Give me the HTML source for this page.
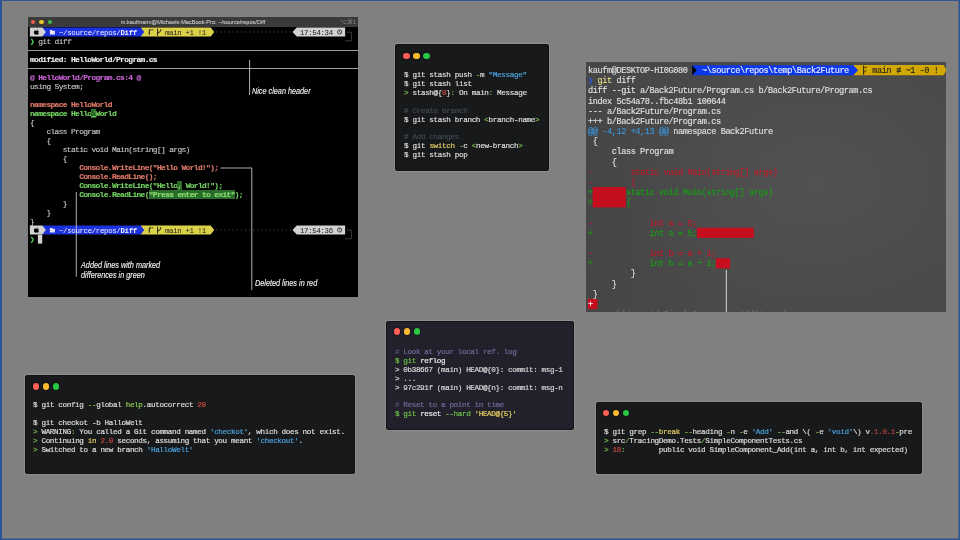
<!DOCTYPE html>
<html><head><meta charset="utf-8">
<style>
html,body{margin:0;padding:0;}
body{width:960px;height:540px;background:#808080;position:relative;overflow:hidden;font-family:"Liberation Mono",monospace;}
.frame{position:absolute;left:0;top:0;width:960px;height:540px;box-sizing:border-box;border:1.5px solid #2c5597;border-top-width:1px;}
.win{position:absolute;overflow:hidden;}
pre{margin:0;position:absolute;will-change:transform;font-family:"Liberation Mono",monospace;white-space:pre;}
.dots{position:absolute;}
.dot{position:absolute;width:6.6px;height:6.6px;border-radius:50%;box-shadow:0 0 0 0.7px rgba(0,0,0,0.35);}
.r{background:#fe5f57;}.y{background:#febc2e;}.g{background:#28c840;}
.t1{-webkit-text-stroke:0.15px currentColor;font-size:7.9px;letter-spacing:-0.64px;line-height:9px;color:#c8c8c8;}
.t1 b{font-weight:bold;}
.pg{color:#5fd75f;}.c{color:#c4c4c4;}.w{color:#ececec;}.m{color:#c462d0;}.rd{color:#dc7868;}.gr{color:#74d262;}
.hl{background:#2b6c2a;color:#86dc72;}
.pl{position:absolute;will-change:transform;font-size:7.4px;letter-spacing:-0.34px;line-height:8.9px;white-space:pre;}
.ann{position:absolute;will-change:transform;font:italic 7.28px/10px "Liberation Sans",sans-serif;color:#f2f2f2;-webkit-text-stroke:0.12px currentColor;white-space:nowrap;transform:scaleY(1.12);transform-origin:0 0;}
.t2{font-size:7.6px;letter-spacing:-0.33px;line-height:8.9px;color:#dcdcdc;-webkit-text-stroke:0.2px currentColor;}
pre i{font-style:normal;}
.g2{color:#79b84c;}.b2{color:#4aa0d8;}.r2{color:#c8503e;}.cm2{color:#414850;}.y2{color:#e0cc66;}
.t3{will-change:transform;-webkit-text-stroke:0.12px currentColor;font-size:8.6px;letter-spacing:-0.42px;line-height:10.17px;color:#e2e2e2;}
.bl3{color:#3a96dd;}.rd3{color:#c01828;}.gr3{color:#16a012;}
.tx{font-size:7.6px;color:#dcdcdc;-webkit-text-stroke:0.2px currentColor;}
.gh{color:#8cc850;}.r4{color:#c8483c;}.cm5{color:#4e4c6e;}.cm5b{color:#6c6a98;}.g5{color:#6cc04a;}.y5{color:#e6d060;}.r6{color:#b04040;}
</style></head>
<body>
<div style="position:absolute;left:2px;top:1px;width:956px;height:537px;box-shadow:inset 0 0 0 1px #84827e;"></div>
<div style="position:absolute;left:958px;top:0;width:1px;height:540px;background:#56698a;"></div>
<div style="position:absolute;left:0;top:538px;width:960px;height:1px;background:#56698a;"></div>
<div style="position:absolute;left:0;top:0;width:2px;height:540px;background:#2a5298;"></div>
<div style="position:absolute;left:0;top:0;width:960px;height:1px;background:#2f5592;"></div>
<div style="position:absolute;left:959px;top:0;width:1px;height:540px;background:#2c5597;"></div>
<div style="position:absolute;left:0;top:539px;width:960px;height:1px;background:#2c5597;"></div>

<!-- Window 1: macOS terminal -->
<div class="win" id="w1" style="left:28px;top:17px;width:330px;height:280px;background:#000;">
  <div style="position:absolute;left:0;top:0;width:330px;height:9.5px;background:#3a3a3a;"></div>
  <div style="position:absolute;left:0;top:0;width:330px;height:9.5px;text-align:center;will-change:transform;font:5.6px/10px 'Liberation Sans',sans-serif;color:#cacaca;-webkit-text-stroke:0.1px currentColor;">m.kaufmann@Michaels-MacBook-Pro: ~/source/repos/Diff</div>
  <div style="position:absolute;right:1.5px;top:0;height:9.5px;will-change:transform;font:5.6px/10px 'Liberation Sans',sans-serif;color:#8a8a8a;">&#8997;&#8984;1</div>
  <div style="position:absolute;left:3px;top:2.5px;width:4.4px;height:4.4px;border-radius:50%;background:#f05a50;"></div>
  <div style="position:absolute;left:11.3px;top:2.5px;width:4.4px;height:4.4px;border-radius:50%;background:#e8c22a;"></div>
  <div style="position:absolute;left:19.7px;top:2.5px;width:4.4px;height:4.4px;border-radius:50%;background:#3cb94a;"></div>
  <div style="position:absolute;left:0;top:32.5px;width:330px;height:1px;background:#9c9c9c;"></div>
  <div style="position:absolute;left:0;top:50.5px;width:330px;height:1px;background:#9c9c9c;"></div>
<svg style="position:absolute;left:0;top:0;" width="330" height="280" viewBox="0 0 330 280"><polygon points="112.8,10.5 182.7,10.5 186.2,14.95 182.7,19.4 112.8,19.4" fill="#dcd24a"/><polygon points="14.4,10.5 112.8,10.5 116.2,14.95 112.8,19.4 14.4,19.4" fill="#1c32dc"/><polygon points="1.9,10.5 14.4,10.5 17.8,14.95 14.4,19.4 1.9,19.4" fill="#d2d2d2"/><rect x="188.2" y="14.45" width="1" height="1" fill="#5a5a5a"/><rect x="192.29999999999998" y="14.45" width="1" height="1" fill="#5a5a5a"/><rect x="196.39999999999998" y="14.45" width="1" height="1" fill="#5a5a5a"/><rect x="200.5" y="14.45" width="1" height="1" fill="#5a5a5a"/><rect x="204.6" y="14.45" width="1" height="1" fill="#5a5a5a"/><rect x="208.7" y="14.45" width="1" height="1" fill="#5a5a5a"/><rect x="212.79999999999998" y="14.45" width="1" height="1" fill="#5a5a5a"/><rect x="216.89999999999998" y="14.45" width="1" height="1" fill="#5a5a5a"/><rect x="221.0" y="14.45" width="1" height="1" fill="#5a5a5a"/><rect x="225.1" y="14.45" width="1" height="1" fill="#5a5a5a"/><rect x="229.2" y="14.45" width="1" height="1" fill="#5a5a5a"/><rect x="233.29999999999998" y="14.45" width="1" height="1" fill="#5a5a5a"/><rect x="237.39999999999998" y="14.45" width="1" height="1" fill="#5a5a5a"/><rect x="241.5" y="14.45" width="1" height="1" fill="#5a5a5a"/><rect x="245.59999999999997" y="14.45" width="1" height="1" fill="#5a5a5a"/><rect x="249.7" y="14.45" width="1" height="1" fill="#5a5a5a"/><rect x="253.79999999999998" y="14.45" width="1" height="1" fill="#5a5a5a"/><rect x="257.9" y="14.45" width="1" height="1" fill="#5a5a5a"/><rect x="262.0" y="14.45" width="1" height="1" fill="#5a5a5a"/><polygon points="264.5,14.95 268.7,10.5 317.1,10.5 317.1,19.4 268.7,19.4" fill="#d2d2d2"/><path d="M319,15.2 H323.4 V23.8 H317" fill="none" stroke="#4a4a4a" stroke-width="0.8"/><g transform="translate(5.6,12.3) scale(0.77)"><path d="M2.2,1.4 C3,1.4 3.3,1.9 3.9,1.9 C4.5,1.9 4.8,1.4 5.5,1.4 C6.1,1.4 6.6,1.9 6.8,2.4 C6.1,2.8 5.9,3.4 6,4 C6.1,4.6 6.5,5 6.9,5.2 C6.6,6.1 6,7 5.4,7 C4.8,7 4.6,6.7 3.9,6.7 C3.2,6.7 3,7 2.4,7 C1.6,7 0.4,5.4 0.4,3.7 C0.4,2.2 1.3,1.4 2.2,1.4 Z M3.9,1.3 C3.9,0.6 4.4,0.1 5,0 C5.1,0.6 4.6,1.3 3.9,1.3 Z" fill="#000"/></g><path d="M21.9,13.1 h2 l0.6,0.7 h2.4 v3.6 h-5 z" fill="#e6e6ff"/><circle cx="311.6" cy="14.95" r="2.1" fill="none" stroke="#222" stroke-width="0.8"/><path d="M311.6,13.55 V14.95 L312.4,15.35" stroke="#222" stroke-width="0.6" fill="none"/><polygon points="112.8,208.5 182.7,208.5 186.2,212.95 182.7,217.4 112.8,217.4" fill="#dcd24a"/><polygon points="14.4,208.5 112.8,208.5 116.2,212.95 112.8,217.4 14.4,217.4" fill="#1c32dc"/><polygon points="1.9,208.5 14.4,208.5 17.8,212.95 14.4,217.4 1.9,217.4" fill="#d2d2d2"/><rect x="188.2" y="212.45" width="1" height="1" fill="#5a5a5a"/><rect x="192.29999999999998" y="212.45" width="1" height="1" fill="#5a5a5a"/><rect x="196.39999999999998" y="212.45" width="1" height="1" fill="#5a5a5a"/><rect x="200.5" y="212.45" width="1" height="1" fill="#5a5a5a"/><rect x="204.6" y="212.45" width="1" height="1" fill="#5a5a5a"/><rect x="208.7" y="212.45" width="1" height="1" fill="#5a5a5a"/><rect x="212.79999999999998" y="212.45" width="1" height="1" fill="#5a5a5a"/><rect x="216.89999999999998" y="212.45" width="1" height="1" fill="#5a5a5a"/><rect x="221.0" y="212.45" width="1" height="1" fill="#5a5a5a"/><rect x="225.1" y="212.45" width="1" height="1" fill="#5a5a5a"/><rect x="229.2" y="212.45" width="1" height="1" fill="#5a5a5a"/><rect x="233.29999999999998" y="212.45" width="1" height="1" fill="#5a5a5a"/><rect x="237.39999999999998" y="212.45" width="1" height="1" fill="#5a5a5a"/><rect x="241.5" y="212.45" width="1" height="1" fill="#5a5a5a"/><rect x="245.59999999999997" y="212.45" width="1" height="1" fill="#5a5a5a"/><rect x="249.7" y="212.45" width="1" height="1" fill="#5a5a5a"/><rect x="253.79999999999998" y="212.45" width="1" height="1" fill="#5a5a5a"/><rect x="257.9" y="212.45" width="1" height="1" fill="#5a5a5a"/><rect x="262.0" y="212.45" width="1" height="1" fill="#5a5a5a"/><polygon points="264.5,212.95 268.7,208.5 317.1,208.5 317.1,217.4 268.7,217.4" fill="#d2d2d2"/><path d="M319,213.2 H323.4 V221.8 H317" fill="none" stroke="#4a4a4a" stroke-width="0.8"/><g transform="translate(5.6,210.3) scale(0.77)"><path d="M2.2,1.4 C3,1.4 3.3,1.9 3.9,1.9 C4.5,1.9 4.8,1.4 5.5,1.4 C6.1,1.4 6.6,1.9 6.8,2.4 C6.1,2.8 5.9,3.4 6,4 C6.1,4.6 6.5,5 6.9,5.2 C6.6,6.1 6,7 5.4,7 C4.8,7 4.6,6.7 3.9,6.7 C3.2,6.7 3,7 2.4,7 C1.6,7 0.4,5.4 0.4,3.7 C0.4,2.2 1.3,1.4 2.2,1.4 Z M3.9,1.3 C3.9,0.6 4.4,0.1 5,0 C5.1,0.6 4.6,1.3 3.9,1.3 Z" fill="#000"/></g><path d="M21.9,211.1 h2 l0.6,0.7 h2.4 v3.6 h-5 z" fill="#e6e6ff"/><circle cx="311.6" cy="212.95" r="2.1" fill="none" stroke="#222" stroke-width="0.8"/><path d="M311.6,211.55 V212.95 L312.4,213.35" stroke="#222" stroke-width="0.6" fill="none"/><path d="M121.3,17.7 V13.8 Q121.3,12.6 122.9,12.6" stroke="#1e1e10" stroke-width="1.1" fill="none"/><path d="M123.7,12.1 l1.5,1.5 M125.2,12.1 l-1.5,1.5" stroke="#1e1e10" stroke-width="0.6" fill="none"/><path d="M129.6,11.6 V18.7 M129.6,16.2 Q132.4,15.6 133.1,12.2" stroke="#1e1e10" stroke-width="1.0" fill="none"/><path d="M121.3,215.7 V211.8 Q121.3,210.6 122.9,210.6" stroke="#1e1e10" stroke-width="1.1" fill="none"/><path d="M123.7,210.1 l1.5,1.5 M125.2,210.1 l-1.5,1.5" stroke="#1e1e10" stroke-width="0.6" fill="none"/><path d="M129.6,209.6 V216.7 M129.6,214.2 Q132.4,213.6 133.1,210.2" stroke="#1e1e10" stroke-width="1.0" fill="none"/><rect x="9.9" y="217.7" width="4.3" height="8.9" fill="#d2d2d2"/><path d="M221.6,43 V78" stroke="#c4c4c4" stroke-width="0.9"/><path d="M48.3,175 V259.7" stroke="#c4c4c4" stroke-width="0.9"/><path d="M192.5,151 H223.8 V273" fill="none" stroke="#c4c4c4" stroke-width="0.9"/></svg>
<div class="pl" style="left:30.6px;top:11.6px;color:#f0f0ff;">~/source/repos/<b>Diff</b></div>
<div class="pl" style="left:137px;top:11.6px;color:#1a1a1a;">main +1 !1</div>
<div class="pl" style="left:272.2px;top:11.6px;color:#1a1a1a;">17:54:34</div>
<div class="pl" style="left:30.6px;top:209.6px;color:#f0f0ff;">~/source/repos/<b>Diff</b></div>
<div class="pl" style="left:137px;top:209.6px;color:#1a1a1a;">main +1 !1</div>
<div class="pl" style="left:272.2px;top:209.6px;color:#1a1a1a;">17:54:36</div>
<div class="ann" style="left:224px;top:69px;">Nice clean header</div>
<div class="ann" style="left:53px;top:244.4px;line-height:8.9px;">Added lines with marked<br>differences in green</div>
<div class="ann" style="left:226.5px;top:261px;">Deleted lines in red</div>
<pre class="t1" style="left:1.6px;top:19.5px;">
<span class="pg">&#x276F;</span> <span class="c">git diff</span>

<b class="w">modified: HelloWorld/Program.cs</b>

<b class="m">@ HelloWorld/Program.cs:4 @</b>
<span class="c">using System;</span>

<b class="rd">namespace HelloWorld</b>
<b class="gr">namespace Hello<span class="hl">_</span>World</b>
<span class="c">{</span>
<span class="c">    class Program</span>
<span class="c">    {</span>
<span class="c">        static void Main(string[] args)</span>
<span class="c">        {</span>
<b class="rd">            Console.WriteLine("Hello World!");</b>
<b class="rd">            Console.ReadLine();</b>
<b class="gr">            Console.WriteLine("Hello<span class="hl">,</span> World!");</b>
<b class="gr">            Console.ReadLine(<span class="hl">"Press enter to exit"</span>);</b>
<span class="c">        }</span>
<span class="c">    }</span>
<span class="c">}</span>

<span class="pg">&#x276F;</span></pre>
</div>

<!-- Window 2 -->
<div class="win" id="w2" style="left:395px;top:43.5px;width:154px;height:127px;background:#18191b;border-radius:3px;box-shadow:0 0 0 1px #8e8e8e, inset 0 0 0 0.8px #0f1012;">
  <div class="dot r" style="left:8.2px;top:9px;"></div>
  <div class="dot y" style="left:18.2px;top:9px;"></div>
  <div class="dot g" style="left:28.2px;top:9px;"></div>
<pre class="t2" style="left:8.6px;top:27.7px;">$ git stash push <i class="g2">-</i>m <i class="b2">"Message"</i>
$ git stash list
<i class="g2">&gt;</i> stash@{<i class="r2">0</i>}<i class="g2">:</i> On main<i class="g2">:</i> Message

<i class="cm2"># Create branch</i>
$ git stash branch <i class="g2">&lt;</i>branch-name<i class="g2">&gt;</i>

<i class="cm2"># Add changes</i>
$ git <i class="y2">switch</i> <i class="g2">-</i>c <i class="g2">&lt;</i>new-branch<i class="g2">&gt;</i>
$ git stash pop</pre>
</div>

<!-- Window 3: windows terminal -->
<div class="win" id="w3" style="left:586px;top:62px;width:360px;height:249.5px;background:#4a4a4a;background-image:radial-gradient(ellipse 200px 140px at 230px 120px, rgba(255,255,255,0.045), rgba(255,255,255,0) 100%),linear-gradient(90deg, rgba(0,0,0,0.06), rgba(0,0,0,0) 40%);">
<svg style="position:absolute;left:0;top:0;" width="360" height="250"><polygon points="267.34,3.1 357.7,3.1 360.5,8.2 357.7,13.2 267.34,13.2" fill="#d2a800"/><polygon points="106.18,3.3 267.34,3.3 272.08,8.25 267.34,13.2 106.18,13.2" fill="#0c38ec"/><polygon points="106.18,3.3 110.58000000000001,8.25 106.18,13.2" fill="#000"/><rect x="6.64" y="125.05" width="33.18" height="20.34" fill="#c50f1f"/><rect x="110.92" y="165.73" width="56.88" height="10.17" fill="#c50f1f"/><rect x="129.88" y="196.24" width="14.22" height="10.17" fill="#c50f1f"/><rect x="1.90" y="236.92" width="9.48" height="10.17" fill="#c50f1f"/><path d="M277.6,3.6 V12.7 M278.4,5.4 H280.6 M280.2,8.2 L277.7,10.7" stroke="#1a1a1a" stroke-width="0.95" fill="none"/><rect x="139.8" y="208" width="1" height="42" fill="#d8d8d8"/></svg><pre class="t3" style="left:1.9px;top:3.7px;">kaufm@DESKTOP-HI0G080                                     <span style="color:#222">  main &#8802; ~1 -0 !</span>
<i style="color:#2c5cf0">&#x276F;</i> <i style="color:#e8dc8c">git</i> diff
diff --git a/Back2Future/Program.cs b/Back2Future/Program.cs
index 5c54a78..fbc48b1 100644
--- a/Back2Future/Program.cs
+++ b/Back2Future/Program.cs
<i class="bl3">@@ -4,12 +4,13 @@</i> namespace Back2Future
 {
     class Program
     {
<i class="rd3">-        static void Main(string[] args)</i>
<i class="rd3">-        {</i>
<i class="gr3">+       static void Main(string[] args)</i>
<i class="gr3">+       {</i>

<i class="rd3">-            int a = 5;</i>
<i class="gr3">+            int a = 5;</i>

<i class="rd3">-            int b = a + 1;</i>
<i class="gr3">+            int b = a + 1;</i>
         }
     }
 }
<i style="color:#fff">+</i>
<i style="color:#6c6c6c">    public void SimpleComponent_Add(int a)</i></pre>
<div class="t3" style="position:absolute;left:115.7px;top:3.7px;line-height:10.17px;color:#f2f2ff;white-space:pre;">~\source\repos\temp\Back2Future</div>
</div>

<!-- Window 4 -->
<div class="win" id="w4" style="left:25px;top:374.5px;width:330px;height:99.5px;background:#18191b;border-radius:3px;box-shadow:0 0 0 1px #8e8e8e, inset 0 0 0 0.8px #0f1012;">
  <div class="dot r" style="left:7.7px;top:8.5px;"></div>
  <div class="dot y" style="left:17.7px;top:8.5px;"></div>
  <div class="dot g" style="left:27.7px;top:8.5px;"></div>
<pre class="tx" style="left:8.4px;top:26.5px;letter-spacing:-0.345px;line-height:8.95px;">$ git config <i class="g2">--</i>global <i class="gh">help</i>.autocorrect <i class="r4">20</i>

$ git checkot -b HalloWelt
<i class="g2">&gt;</i> WARNING<i class="g2">:</i> You called a Git command named <i class="b2">'checkot'</i>, which does not exist.
<i class="g2">&gt;</i> Continuing <i class="y2">in</i> <i class="r4">2.0</i> seconds, assuming that you meant <i class="b2">'checkout'</i>.
<i class="g2">&gt;</i> Switched to a new branch <i class="b2">'HalloWelt'</i></pre>
</div>

<!-- Window 5 -->
<div class="win" id="w5" style="left:386px;top:320.5px;width:187.5px;height:109px;background:#22212b;border-radius:3px;box-shadow:0 0 0 1px #8e8e8e, inset 0 0 0 0.8px #0f1012;">
  <div class="dot r" style="left:7.7px;top:7.7px;"></div>
  <div class="dot y" style="left:17.7px;top:7.7px;"></div>
  <div class="dot g" style="left:27.7px;top:7.7px;"></div>
<pre class="tx" style="left:8.5px;top:27.5px;letter-spacing:-0.37px;line-height:8.91px;color:#d4d4d4;"><i class="cm5">#</i><i class="cm5b"> Look at your local ref. log</i>
<i class="g5">$ git</i> <i style="color:#ececec">reflog</i>
&gt; 0b38667 (main) HEAD@{0}: commit: msg-1
&gt; ...
&gt; 97c291f (main) HEAD@{n}: commit: msg-n

<i class="cm5">#</i><i class="cm5b"> Reset to a point in time</i>
<i class="g5">$ git</i> <i style="color:#ececec">reset</i> <i class="g5">--hard</i> <i class="y5">'HEAD@{5}'</i></pre>
</div>

<!-- Window 6 -->
<div class="win" id="w6" style="left:596px;top:402px;width:326px;height:72px;background:#18191b;border-radius:3px;box-shadow:0 0 0 1px #8e8e8e, inset 0 0 0 0.8px #0f1012;">
  <div class="dot r" style="left:6.7px;top:7.9px;"></div>
  <div class="dot y" style="left:16.7px;top:7.9px;"></div>
  <div class="dot g" style="left:26.7px;top:7.9px;"></div>
<pre class="tx" style="left:7.7px;top:26px;letter-spacing:-0.34px;line-height:9px;">$ git grep <i class="g2">--</i><i class="y2">break</i> <i class="g2">--</i>heading <i class="g2">-</i>n <i class="g2">-</i>e <i class="b2">'Add'</i> <i class="g2">--</i>and \( <i class="g2">-</i>e <i class="b2">'void'</i>\) v<i class="r6">.1.0.1</i><i class="g2">-</i>pre
<i class="g2">&gt;</i> src<i class="g2">/</i>TracingDemo.Tests<i class="g2">/</i>SimpleComponentTests.cs
<i class="g2">&gt;</i> <i class="r4">18</i><i class="g2">:</i>        public void SimpleComponent_Add(int a, int b, int expected)</pre>
</div>

</body></html>
